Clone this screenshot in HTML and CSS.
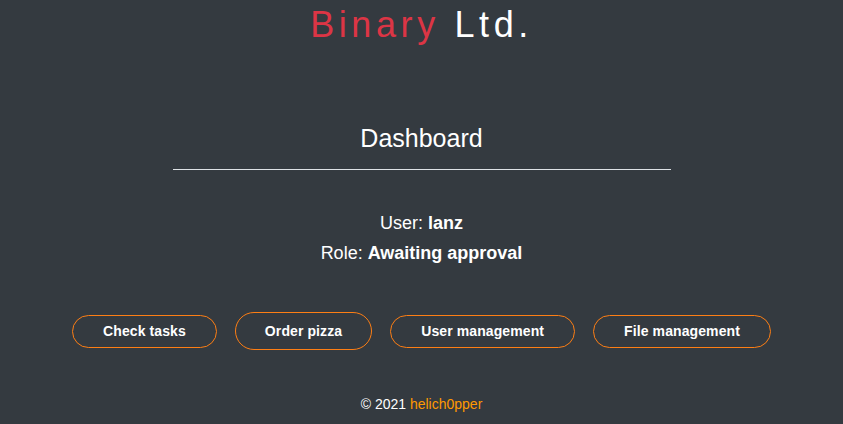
FILE: index.html
```html
<!DOCTYPE html>
<html>
<head>
<meta charset="utf-8">
<link rel="stylesheet" href="styles.css">
</head>
<body>
<div class="page">
  <h1 class="brand"><span class="brand-red">Binary</span> <span class="brand-white">Ltd.</span></h1>
  <h2 class="title">Dashboard</h2>
  <hr class="rule">
  <div class="info">
    <p class="info-line">User: <b>lanz</b></p>
    <p class="info-line">Role: <b>Awaiting approval</b></p>
  </div>
  <div class="buttons">
    <a class="btn">Check tasks</a>
    <a class="btn btn-active">Order pizza</a>
    <a class="btn">User management</a>
    <a class="btn">File management</a>
  </div>
  <footer class="footer">© 2021 <span class="author">helich0pper</span></footer>
</div>
</body>
</html>
```

FILE: styles.css
```css
html, body {
  margin: 0;
  padding: 0;
  background: #343a40;
  height: 100%;
}
body {
  font-family: "Liberation Sans", Arial, sans-serif;
  color: #ffffff;
}
.page {
  display: flex;
  flex-direction: column;
  align-items: center;
}
.brand {
  margin: 4px 0 0 0;
  font-size: 36px;
  font-weight: normal;
  letter-spacing: 4.6px;
  line-height: 42px;
}
.brand-red { color: #dc3545; }
.brand-white { color: #ffffff; }
.title {
  margin: 77px 0 0 0;
  font-size: 25px;
  font-weight: normal;
  line-height: 30px;
}
.rule {
  width: 498px;
  margin: 16px 0 0 0;
  border: 0;
  border-top: 1px solid #dee2e6;
  height: 0;
}
.info {
  margin-top: 38px;
  text-align: center;
}
.info-line {
  margin: 0;
  font-size: 18px;
  line-height: 30px;
}
.buttons {
  margin-top: 44px;
  display: flex;
  align-items: center;
  gap: 18px;
}
.btn {
  display: block;
  border: 1px solid #fd7e14;
  border-radius: 17px;
  padding: 0 30px;
  height: 31px;
  line-height: 31px;
  font-size: 14px;
  font-weight: bold;
  letter-spacing: 0.1px;
  color: #ffffff;
}
.btn-active {
  height: 36px;
  line-height: 36px;
  border-radius: 19px;
  padding: 0 29px;
}
.footer {
  margin-top: 44px;
  font-size: 14px;
  line-height: 20px;
}
.author { color: #ff9900; }
```
